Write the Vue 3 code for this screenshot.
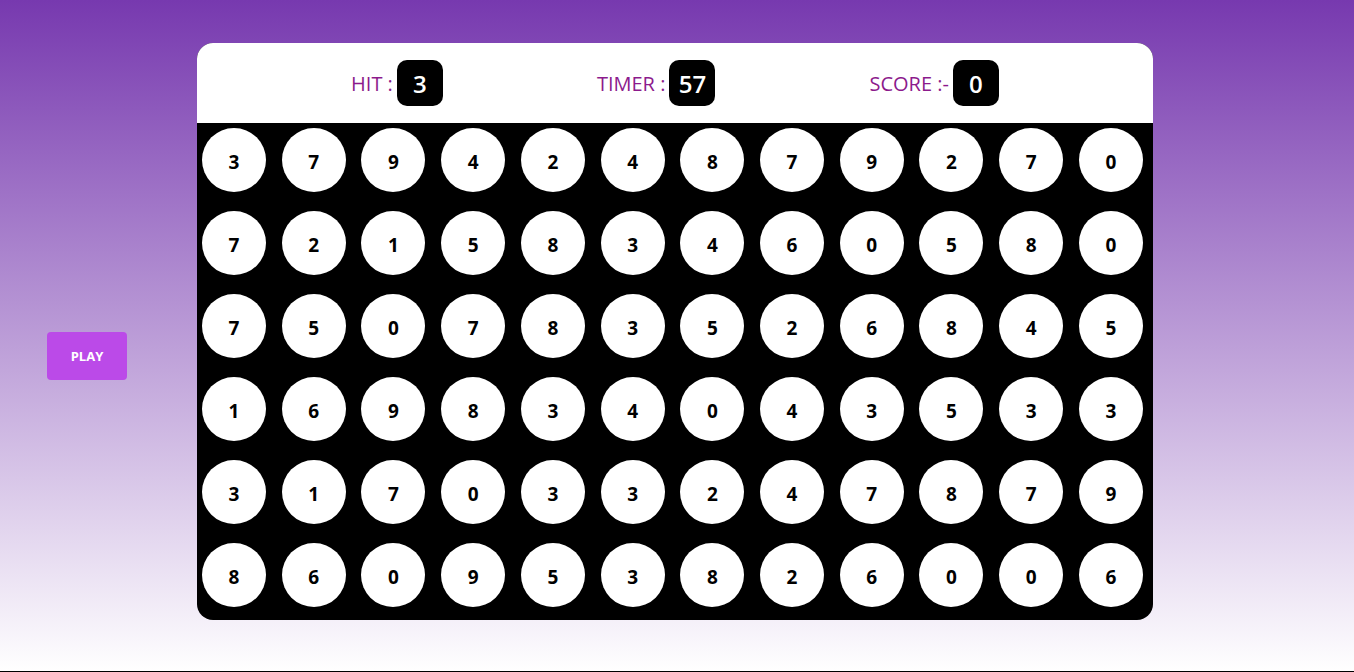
<script setup>
import { ref } from 'vue'

const stats = ref([
  { label: 'HIT :', value: 3 },
  { label: 'TIMER :', value: 57 },
  { label: 'SCORE :-', value: 0 },
])

const rows = [
  '379424879270',
  '721583460580',
  '750783526845',
  '169834043533',
  '317033247879',
  '860953826006',
]
const bubbles = rows.join('').split('')
</script>

<template>
  <main class="page">
    <button class="play" type="button">PLAY</button>
    <section class="panel">
      <header class="stats">
        <div v-for="stat in stats" :key="stat.label" class="stat">
          <span class="label">{{ stat.label }}</span>
          <output class="value">{{ stat.value }}</output>
        </div>
      </header>
      <div class="board">
        <button v-for="(n, i) in bubbles" :key="i" class="bubble" type="button">{{ n }}</button>
      </div>
    </section>
  </main>
</template>

<style>
body {
  margin: 0;
}
</style>

<style scoped>
.page {
  box-sizing: border-box;
  min-height: 100vh;
  display: flex;
  align-items: stretch;
  gap: 70px;
  padding: 43px 201px 51px 47px;
  border-bottom: 1px solid #000;
  background: linear-gradient(#7739af, #fff) border-box;
  font-family: "Segoe UI", "Open Sans", "Noto Sans", sans-serif;
}

.play {
  align-self: center;
  flex: none;
  width: 80px;
  height: 48px;
  margin-top: 49px;
  padding: 0;
  border: 0;
  border-radius: 4px;
  background: #bb4ae8;
  color: #fff;
  font: 700 13px "Segoe UI", "Open Sans", "Noto Sans", sans-serif;
}

.panel {
  flex: 1;
  display: flex;
  flex-direction: column;
  overflow: hidden;
  border-radius: 16px;
  background: #000;
}

.stats {
  display: flex;
  align-items: center;
  justify-content: space-evenly;
  height: 80px;
  background: #fff;
}

.stat {
  display: flex;
  align-items: center;
  gap: 4px;
}

.label {
  padding-top: 2px;
  color: #8c1a8c;
  font-size: 20px;
  font-weight: 400;
  line-height: 28px;
}

.value {
  box-sizing: border-box;
  width: 46px;
  height: 46px;
  padding-top: 2px;
  border-radius: 10px;
  background: #000;
  color: #fff;
  font-size: 24px;
  font-weight: 600;
  line-height: 44px;
  text-align: center;
}

.board {
  flex: 1;
  display: grid;
  grid-template-columns: repeat(12, 64px);
  grid-auto-rows: 64px;
  justify-content: space-between;
  row-gap: 19px;
  padding: 5px 10px 13px 5px;
}

.bubble {
  padding: 4px 0 0;
  border: 0;
  border-radius: 50%;
  background: #fff;
  color: #000;
  font: 700 19px "Segoe UI", "Open Sans", "Noto Sans", sans-serif;
}
</style>
